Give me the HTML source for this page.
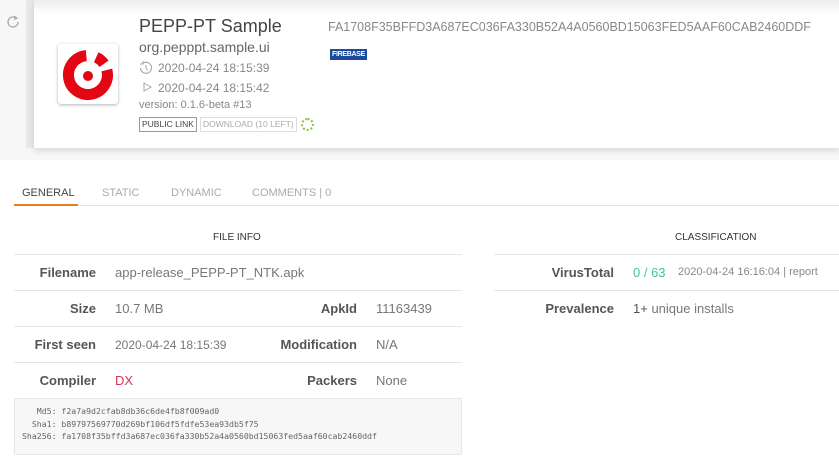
<html><head><style>
body{margin:0;width:839px;height:462px;background:#fff;font-family:"Liberation Sans",sans-serif;position:relative;overflow:hidden}
.a{position:absolute;white-space:nowrap}
.lbl{position:absolute;font-weight:bold;color:#555;font-size:13px;text-align:right}
.val{position:absolute;color:#777;font-size:13px}
.ln{position:absolute;height:1px;background:#e4e4e4}
</style></head><body>
<div class="a" style="left:0;top:0;width:839px;height:160px;background:linear-gradient(#e6e6e6,#f7f7f7 20px,#f7f7f7)"></div>
<div class="a" style="left:0;top:0;width:26px;height:148px;background:#f7f7f7"></div>
<div class="a" style="left:26px;top:0;width:8px;height:148px;background:#e8e8e8"></div>
<div class="a" style="left:34px;top:0;width:805px;height:148px;background:linear-gradient(#ececec,#fff 14px);box-shadow:0 3px 6px rgba(0,0,0,.12)"></div>
<svg class="a" style="left:5px;top:14px" width="16" height="16" viewBox="0 0 16 16"><path d="M13 8a5 5 0 1 1-2-4" fill="none" stroke="#aaa" stroke-width="1.3"/><path d="M9 2l3 2-3 1.5" fill="none" stroke="#aaa" stroke-width="1.2"/></svg>
<div class="a" style="left:58px;top:44px;width:60px;height:60px;background:#fff;border-radius:3px;box-shadow:0 1px 3px rgba(0,0,0,.3)"></div>
<svg class="a" style="left:61px;top:47px" width="56" height="56" viewBox="0 0 56 56"><path d="M25.3 8.6A19.5 19.5 0 1 0 45.8 23" fill="none" stroke="#e30613" stroke-width="11"/><path d="M35.2 10.3A19.5 19.5 0 0 1 43 16.8" fill="none" stroke="#e30613" stroke-width="11"/><circle cx="27" cy="29" r="5" fill="#e30613"/></svg>
<div class="a" style="left:139px;top:16px;font-size:18px;color:#444">PEPP-PT Sample</div>
<div class="a" style="left:139px;top:39px;font-size:14px;color:#666">org.pepppt.sample.ui</div>
<svg class="a" style="left:139px;top:61px" width="14" height="14" viewBox="0 0 14 14"><path d="M3 3a5.5 5.5 0 1 1-1.5 4" fill="none" stroke="#aaa" stroke-width="1.2"/><path d="M1 3h3V0" fill="none" stroke="#aaa"/><path d="M7 4v3.5l2 1.5" fill="none" stroke="#aaa"/></svg>
<div class="a" style="left:158px;top:61px;font-size:12px;color:#888">2020-04-24 18:15:39</div>
<svg class="a" style="left:143px;top:82px" width="10" height="10"><path d="M1 1l7 4-7 4z" fill="none" stroke="#aaa"/></svg>
<div class="a" style="left:158px;top:81px;font-size:12px;color:#888">2020-04-24 18:15:42</div>
<div class="a" style="left:139px;top:99px;font-size:11px;color:#888">version: 0.1.6-beta #13</div>
<div class="a" style="left:139px;top:117px;font-size:8.5px;color:#444;border:1px solid #999;padding:2px 2px;line-height:9px">PUBLIC LINK</div>
<div class="a" style="left:200px;top:117px;font-size:8.5px;color:#aaa;border:1px solid #ddd;padding:2px 2px;line-height:9px">DOWNLOAD (10 LEFT)</div>
<div class="a" style="left:301px;top:118px;width:9px;height:9px;border:2px dotted #8bc34a;border-radius:50%"></div>
<div class="a" style="left:328px;top:20px;font-size:12.5px;color:#888">FA1708F35BFFD3A687EC036FA330B52A4A0560BD15063FED5AAF60CAB2460DDF</div>
<div class="a" style="left:330px;top:49px;font-size:7px;font-weight:bold;color:#fff;background:#1a4b9c;padding:2px 2px;letter-spacing:-.3px">FIREBASE</div>
<div class="a" style="left:22px;top:187px;font-size:11px;color:#444">GENERAL</div>
<div class="a" style="left:102px;top:187px;font-size:11px;color:#aaa">STATIC</div>
<div class="a" style="left:171px;top:187px;font-size:11px;color:#aaa">DYNAMIC</div>
<div class="a" style="left:252px;top:187px;font-size:11px;color:#aaa">COMMENTS | 0</div>
<div class="ln" style="left:14px;top:205px;width:825px"></div>
<div class="a" style="left:14px;top:204px;width:64px;height:2px;background:#e67e22"></div>
<div class="a" style="left:213px;top:232px;font-size:10px;color:#333">FILE INFO</div>
<div class="a" style="left:675px;top:232px;font-size:10px;color:#333">CLASSIFICATION</div>
<div class="ln" style="left:14px;top:254px;width:448px"></div>
<div class="ln" style="left:14px;top:290px;width:448px"></div>
<div class="ln" style="left:14px;top:326px;width:448px"></div>
<div class="ln" style="left:14px;top:362px;width:448px"></div>
<div class="ln" style="left:494px;top:254px;width:345px"></div>
<div class="ln" style="left:494px;top:290px;width:345px"></div>
<div class="lbl" style="right:743px;top:265px">Filename</div><div class="val" style="left:115px;top:265px">app-release_PEPP-PT_NTK.apk</div>
<div class="lbl" style="right:743px;top:301px">Size</div><div class="val" style="left:115px;top:301px">10.7 MB</div>
<div class="lbl" style="right:482px;top:301px">ApkId</div><div class="val" style="left:376px;top:301px">11163439</div>
<div class="lbl" style="right:743px;top:337px">First seen</div><div class="val" style="left:115px;top:338px;font-size:12px">2020-04-24 18:15:39</div>
<div class="lbl" style="right:482px;top:337px">Modification</div><div class="val" style="left:376px;top:337px">N/A</div>
<div class="lbl" style="right:743px;top:373px">Compiler</div><div class="val" style="left:115px;top:373px;color:#e0305a">DX</div>
<div class="lbl" style="right:482px;top:373px">Packers</div><div class="val" style="left:376px;top:373px">None</div>
<div class="lbl" style="right:225px;top:265px">VirusTotal</div><div class="val" style="left:633px;top:265px;color:#3ec98f">0 / 63</div><div class="val" style="left:678px;top:266px;font-size:11px;color:#888">2020-04-24 16:16:04 | report</div>
<div class="lbl" style="right:225px;top:301px">Prevalence</div><div class="val" style="left:633px;top:301px"><span style="color:#555">1+</span> unique installs</div>
<div class="a" style="left:14px;top:398px;width:446px;height:55px;background:#f7f7f7;border:1px solid #e6e6e6;border-radius:2px"></div>
<pre style="position:absolute;white-space:pre;left:22px;top:405px;margin:0;font-family:'DejaVu Sans Mono',monospace;font-size:8.2px;line-height:12.5px;color:#666">   Md5: f2a7a9d2cfab8db36c6de4fb8f009ad0
  Sha1: b89797569770d269bf106df5fdfe53ea93db5f75
Sha256: fa1708f35bffd3a687ec036fa330b52a4a0560bd15063fed5aaf60cab2460ddf</pre>
</body></html>
